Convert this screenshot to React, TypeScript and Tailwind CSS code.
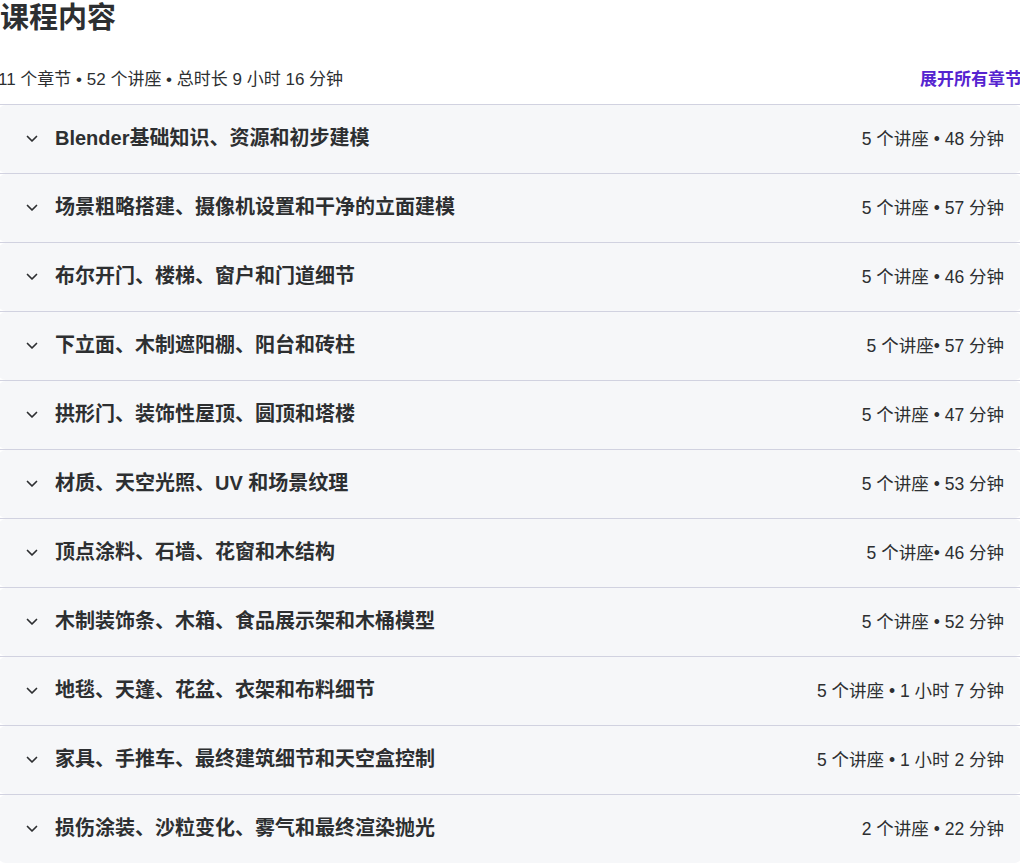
import React from "react"

interface Section {
  title: string
  meta: string
}

const SECTIONS: readonly Section[] = [
  { title: "Blender基础知识、资源和初步建模", meta: "5 个讲座 • 48 分钟" },
  { title: "场景粗略搭建、摄像机设置和干净的立面建模", meta: "5 个讲座 • 57 分钟" },
  { title: "布尔开门、楼梯、窗户和门道细节", meta: "5 个讲座 • 46 分钟" },
  { title: "下立面、木制遮阳棚、阳台和砖柱", meta: "5 个讲座• 57 分钟" },
  { title: "拱形门、装饰性屋顶、圆顶和塔楼", meta: "5 个讲座 • 47 分钟" },
  { title: "材质、天空光照、UV 和场景纹理", meta: "5 个讲座 • 53 分钟" },
  { title: "顶点涂料、石墙、花窗和木结构", meta: "5 个讲座• 46 分钟" },
  { title: "木制装饰条、木箱、食品展示架和木桶模型", meta: "5 个讲座 • 52 分钟" },
  { title: "地毯、天篷、花盆、衣架和布料细节", meta: "5 个讲座 • 1 小时 7 分钟" },
  { title: "家具、手推车、最终建筑细节和天空盒控制", meta: "5 个讲座 • 1 小时 2 分钟" },
  { title: "损伤涂装、沙粒变化、雾气和最终渲染抛光", meta: "2 个讲座 • 22 分钟" },
]

const Chevron = () => (
  <svg width="12" height="8" viewBox="0 0 12 8" fill="none" className="shrink-0">
    <path d="M1.5 1.5 6 6l4.5-4.5" stroke="#2d2f31" strokeWidth="1.7" strokeLinecap="round" strokeLinejoin="round" />
  </svg>
)

const SectionRow = ({ section }: { section: Section }) => (
  <div className="border-t border-[#d1d2e0]">
    <div className="flex h-[68px] items-center justify-between rounded-lg bg-[#f6f7f9] pl-[28px] pr-[18px]">
      <div className="flex items-center gap-[17px]">
        <Chevron />
        <span className="-mt-[2px] text-[20px] font-semibold text-[#2d2f31]">{section.title}</span>
      </div>
      <span className="text-[17.5px] text-[#2d2f31]">{section.meta}</span>
    </div>
  </div>
)

export default function App() {
  return (
    <div
      className="min-h-screen overflow-hidden bg-white"
      style={{ fontFamily: '"Liberation Sans", "Noto Sans CJK SC", sans-serif' }}
    >
      <div className="-ml-[2px] w-[1024px]">
        <h2 className="pl-[2px] text-[29px] font-semibold leading-[36px] text-[#2d2f31]">课程内容</h2>

        <div className="mt-[32px] mb-[12px] flex h-[24px] items-center justify-between">
          <span className="text-[17px] text-[#2d2f31]">11 个章节 • 52 个讲座 • 总时长 9 小时 16 分钟</span>
          <button type="button" className="text-[17px] font-bold text-[#5624d0]">
            展开所有章节
          </button>
        </div>

        {SECTIONS.map(section => (
          <SectionRow key={section.title} section={section} />
        ))}
      </div>
    </div>
  )
}
